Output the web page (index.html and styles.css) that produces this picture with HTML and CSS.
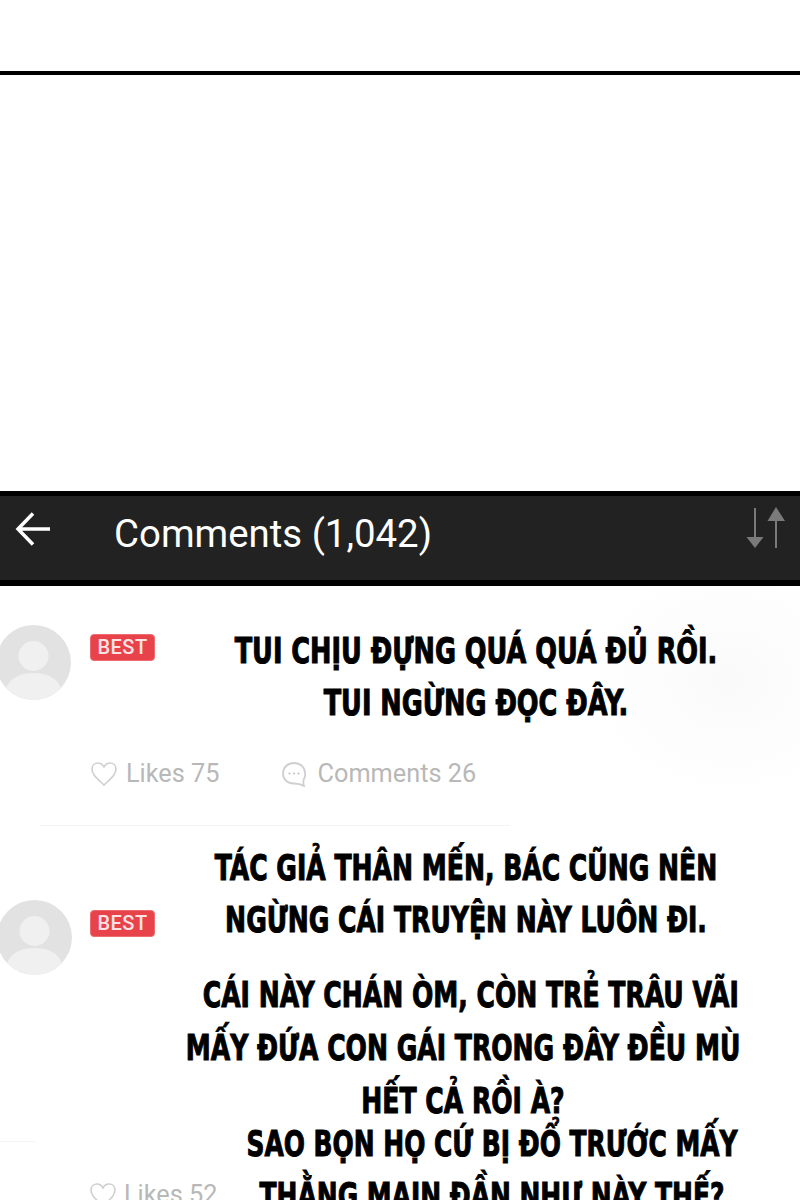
FILE: index.html
```html
<!DOCTYPE html>
<html lang="vi">
<head>
    <meta charset="UTF-8">
    <meta name="viewport" content="width=device-width, initial-scale=1.0">
    <title>Comments</title>
    <link rel="stylesheet" href="styles.css">
</head>
<body>
    <div class="page">
        <div class="top-panel">
            <div class="top-rule"></div>
        </div>

        <div class="header">
            <svg class="back-icon" width="36" height="36" viewBox="0 0 36 36">
                <path d="M18 2.500 L3 18 L18 33.500 M3 18 H35" fill="none" stroke="#fff" stroke-width="3.500"/>
            </svg>
            <h1 class="title">Comments (1,042)</h1>
            <svg class="sort-icon" width="44" height="44" viewBox="0 0 44 44">
                <path d="M11 2 V31" stroke="#7a7a7a" stroke-width="2"/>
                <path d="M2.500 31 H19.500 L11 42 Z" fill="#7a7a7a"/>
                <path d="M32 15 V42" stroke="#7a7a7a" stroke-width="2"/>
                <path d="M23.500 15 H41 L32 1 Z" fill="#7a7a7a"/>
            </svg>
        </div>

        <div class="comment comment-first">
            <svg class="avatar" width="75" height="75" viewBox="0 0 75 75">
                <circle cx="37.5" cy="37.5" r="37.5" fill="#e2e2e2"/>
                <circle cx="37.5" cy="31" r="15" fill="#f0f0f0"/>
                <path d="M10 63 C14 52 26 48 37.5 48 C49 48 61 52 65 63 A37.5 37.5 0 0 1 10 63 Z" fill="#f0f0f0"/>
            </svg>
            <span class="badge">BEST</span>
            <div class="captions">
                <p class="caption caption-a">TUI CHỊU ĐỰNG QUÁ QUÁ ĐỦ RỒI.<br>TUI NGỪNG ĐỌC ĐÂY.</p>
            </div>
            <div class="stats">
                <span class="stat stat-likes">
                    <svg width="28" height="26" viewBox="0 0 28 26"><path d="M14 24 C8 18 2 14 2 8 C2 4 5 2 8 2 C11 2 13 4 14 6 C15 4 17 2 20 2 C23 2 26 4 26 8 C26 14 20 18 14 24 Z" fill="none" stroke="#cfcfcf" stroke-width="1.6"/></svg>
                    Likes 75
                </span>
                <span class="stat stat-comments">
                    <svg width="26" height="26" viewBox="0 0 26 26">
                        <path d="M13 2 C6.5 2 2 6.5 2 12.5 C2 18.5 6.5 22.5 13 22.5 C16 22.5 19 22.5 23 25 C22 22 22 20.500 23 18 C24 16 24.500 14 24 12 C24 6.500 19.500 2 13 2 Z" fill="none" stroke="#cfcfcf" stroke-width="1.800"/>
                        <circle cx="8.500" cy="12.500" r="1" fill="#bdbdbd"/><circle cx="13" cy="12.500" r="1" fill="#bdbdbd"/><circle cx="17.500" cy="12.500" r="1" fill="#bdbdbd"/>
                    </svg>
                    Comments 26
                </span>
            </div>
        </div>

        <div class="divider"></div>

        <div class="comment comment-second">
            <div class="avatar-col">
                <svg class="avatar" width="75" height="75" viewBox="0 0 75 75">
                    <circle cx="37.5" cy="37.5" r="37.5" fill="#e2e2e2"/>
                    <circle cx="37.5" cy="31" r="15" fill="#f0f0f0"/>
                    <path d="M10 63 C14 52 26 48 37.5 48 C49 48 61 52 65 63 A37.5 37.5 0 0 1 10 63 Z" fill="#f0f0f0"/>
                </svg>
                <div class="divider-short"></div>
            </div>
            <span class="badge">BEST</span>
            <div class="captions">
                <p class="caption caption-b">TÁC GIẢ THÂN MẾN, BÁC CŨNG NÊN<br>NGỪNG CÁI TRUYỆN NÀY LUÔN ĐI.</p>
                <p class="caption caption-c"><span class="caption-shift">CÁI NÀY CHÁN ÒM, CÒN TRẺ TRÂU VÃI</span>MẤY ĐỨA CON GÁI TRONG ĐÂY ĐỀU MÙ<br>HẾT CẢ RỒI À?</p>
                <p class="caption caption-d">SAO BỌN HỌ CỨ BỊ ĐỔ TRƯỚC MẤY<br>THẰNG MAIN ĐẦN NHƯ NÀY THẾ?</p>
            </div>
            <div class="stats stats-clipped">
                <span class="stat stat-likes">
                    <svg width="28" height="26" viewBox="0 0 28 26"><path d="M14 24 C8 18 2 14 2 8 C2 4 5 2 8 2 C11 2 13 4 14 6 C15 4 17 2 20 2 C23 2 26 4 26 8 C26 14 20 18 14 24 Z" fill="none" stroke="#cfcfcf" stroke-width="1.6"/></svg>
                    Likes 52
                </span>
            </div>
        </div>
    </div>
</body>
</html>
```

FILE: styles.css
```css
* {
    margin: 0;
    padding: 0;
    box-sizing: border-box;
}

body {
    background-color: #fff;
    font-family: Roboto, 'Liberation Sans', sans-serif;
}

.page {
    width: 800px;
    height: 1200px;
    overflow: hidden;
    background: radial-gradient(ellipse 150px 120px at 730px 680px, #fafafa, #fff);
}

.top-panel {
    height: 491px;
    padding-top: 71px;
    background-color: #fff;
}

.top-rule {
    height: 4px;
    background-color: #000;
}

/* Header bar */
.header {
    height: 95px;
    display: flex;
    align-items: center;
    background-color: #222;
    border-top: 5px solid #000;
    border-bottom: 6px solid #000;
}

.back-icon {
    margin-left: 15px;
    margin-top: -18px;
}

.title {
    margin-left: 63px;
    margin-top: -10px;
    color: #fff;
    font-size: 38.4px;
    font-weight: 400;
}

.sort-icon {
    margin-left: auto;
    margin-right: 12px;
    margin-top: -20px;
}

/* Comments */
.comment {
    display: grid;
    grid-template-columns: 90px 65px 645px;
    align-items: start;
    align-content: start;
}

.comment-first {
    height: 239px;
    padding-top: 39px;
}

.comment-second {
    height: 375px;
    padding-top: 17px;
}

.avatar {
    display: block;
    margin-left: -4px;
}

.comment-second .avatar {
    margin-top: 58px;
    margin-left: -3px;
}

.badge {
    height: 27px;
    margin-top: 9px;
    background-color: #e8424a;
    border: 1px solid #ee6b6f;
    border-radius: 4px;
    color: #fde3e3;
    font-size: 20px;
    font-weight: 500;
    letter-spacing: 0.5px;
    line-height: 25px;
    text-align: center;
}

.comment-second .badge {
    margin-top: 68px;
}

/* Centred on a box as wide as the page, moved by margin-left */
.caption {
    width: 800px;
    color: #000;
    font-family: 'DejaVu Sans Condensed', 'DejaVu Sans', sans-serif;
    font-size: 36px;
    font-weight: 700;
    line-height: 52px;
    text-align: center;
    white-space: nowrap;
    transform: scaleX(0.775);
    -webkit-text-stroke: 1px #000;
}

.caption-a {
    margin-left: -79px;
    transform: scaleX(0.79);
}

.caption-b {
    margin-left: -89px;
}

.caption-c {
    margin-top: 22px;
    margin-left: -92px;
    line-height: 53px;
}

.caption-shift {
    display: block;
    padding-left: 20px;
}

.caption-d {
    margin-top: -9px;
    margin-left: -63px;
    transform: scaleX(0.77);
}

.stats {
    grid-column: 2 / 4;
    display: flex;
    gap: 61px;
    margin-top: 30px;
    color: #b8b8b8;
    font-size: 25.3px;
}

.stats-clipped {
    margin-top: -42px;
    margin-left: -1px;
}

.stat {
    display: flex;
    align-items: center;
    gap: 8px;
}

.stat-comments {
    gap: 11px;
}

.stats-clipped .stat {
    gap: 7px;
}

.divider {
    width: 470px;
    height: 1px;
    margin-left: 40px;
    margin-bottom: -1px;
    background-color: #f4f4f4;
}

.divider-short {
    width: 35px;
    height: 1px;
    margin-top: 166px;
    background-color: #f4f4f4;
}
```
